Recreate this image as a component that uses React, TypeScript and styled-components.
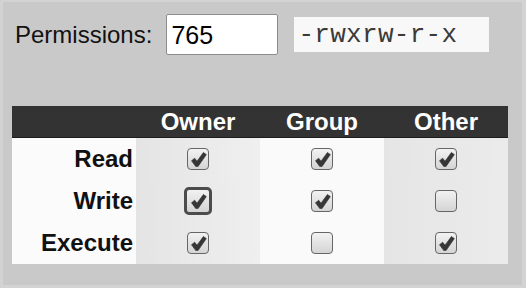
import React from 'react';
import styled, { createGlobalStyle } from 'styled-components';

const GlobalStyle = createGlobalStyle`
  html, body {
    margin: 0;
    padding: 0;
    background: #d3d3d3;
  }
  body {
    font-family: 'Liberation Sans', Arial, sans-serif;
  }
`;

const StyledPage = styled.div`
  width: 526px;
  height: 288px;
  box-sizing: border-box;
  padding: 2px 4px 3px 3px;
  display: flex;
`;

const Panel = styled.div`
  flex: 1;
  display: flex;
  flex-direction: column;
  background: #c9c9c9;
`;

const TopRow = styled.div`
  display: flex;
  align-items: center;
  margin-top: 12px;
  padding-left: 12px;
  height: 41px;
`;

const Label = styled.label`
  font-size: 24px;
  color: #111;
  margin-right: 14px;
`;

const OctalInput = styled.input`
  box-sizing: border-box;
  width: 112px;
  height: 41px;
  border: 1px solid #8c8c8c;
  border-radius: 2px;
  background: #fff;
  font-family: 'Liberation Sans', Arial, sans-serif;
  font-size: 25px;
  color: #000;
  padding: 2px 0 0 4px;
  outline: none;
  margin-right: 16px;
`;

const ModeString = styled.div`
  box-sizing: border-box;
  width: 195px;
  height: 35px;
  background: #f8f8f8;
  font-family: 'Liberation Mono', 'Courier New', monospace;
  font-size: 26px;
  color: #3a3a3a;
  display: flex;
  align-items: center;
  padding-left: 4px;
  letter-spacing: 0.3px;
`;

const Table = styled.table`
  margin: 51px 0 0 9px;
  width: 496px;
  border-collapse: collapse;
  table-layout: fixed;
`;

const HeadCell = styled.th`
  width: 124px;
  height: 31px;
  padding: 0;
  background: #333;
  border-bottom: 1px solid #1c1c1c;
  color: #fff;
  font-size: 24px;
  font-weight: bold;
  text-align: center;
  vertical-align: middle;
`;

const RowLabel = styled.th`
  height: 42px;
  padding: 0 3px 0 0;
  background: #fbfbfb;
  text-align: right;
  font-size: 24px;
  font-weight: bold;
  color: #111;
`;

const tones: Record<string, string> = {
  owner: 'linear-gradient(90deg, #e4e4e4, #efefef)',
  group: '#fafafa',
  other: 'linear-gradient(90deg, #e5e5e5, #ebebeb)',
};

const BoxCell = styled.td<{ $tone: string }>`
  height: 42px;
  padding: 0;
  background: ${(p) => tones[p.$tone]};
  text-align: center;
  vertical-align: middle;
`;

const Box = styled.span<{ $focused?: boolean }>`
  display: inline-flex;
  align-items: center;
  justify-content: center;
  box-sizing: border-box;
  width: ${(p) => (p.$focused ? 28 : 22)}px;
  height: ${(p) => (p.$focused ? 28 : 22)}px;
  border: ${(p) => (p.$focused ? '3px solid #4c4c4c' : '1.5px solid #666')};
  border-radius: ${(p) => (p.$focused ? 5 : 4)}px;
  background: linear-gradient(180deg, #f2f2f2, #d4d4d4);
  vertical-align: middle;

  svg {
    flex: none;
    width: 17px;
    height: 17px;
  }
`;

const Checkbox = ({ checked, focused }: { checked: boolean; focused?: boolean }) => (
  <Box $focused={focused}>
    {checked && (
      <svg viewBox="0 0 16 16">
        <path
          d="M1.4 9.2 L4.4 6.8 L6.6 9.6 L12.6 1.4 L15.4 3.4 L7.6 14.6 L5.4 14.6 Z"
          fill="#363636"
          stroke="#363636"
          strokeWidth="0.6"
          strokeLinejoin="round"
        />
      </svg>
    )}
  </Box>
);

const columns = ['owner', 'group', 'other'];

const rows = [
  { name: 'Read', bits: [true, true, true] },
  { name: 'Write', bits: [true, true, false] },
  { name: 'Execute', bits: [true, false, true] },
];

const App = () => {
  return (
    <StyledPage>
      <GlobalStyle />
      <Panel>
        <TopRow>
          <Label>Permissions:</Label>
          <OctalInput defaultValue="765" />
          <ModeString>-rwxrw-r-x</ModeString>
        </TopRow>

        <Table>
          <thead>
            <tr>
              <HeadCell />
              <HeadCell>Owner</HeadCell>
              <HeadCell>Group</HeadCell>
              <HeadCell>Other</HeadCell>
            </tr>
          </thead>
          <tbody>
            {rows.map((row) => (
              <tr key={row.name}>
                <RowLabel>{row.name}</RowLabel>
                {row.bits.map((bit, i) => (
                  <BoxCell $tone={columns[i]} key={columns[i]}>
                    <Checkbox checked={bit} focused={row.name === 'Write' && i === 0} />
                  </BoxCell>
                ))}
              </tr>
            ))}
          </tbody>
        </Table>
      </Panel>
    </StyledPage>
  );
};

export default App;
